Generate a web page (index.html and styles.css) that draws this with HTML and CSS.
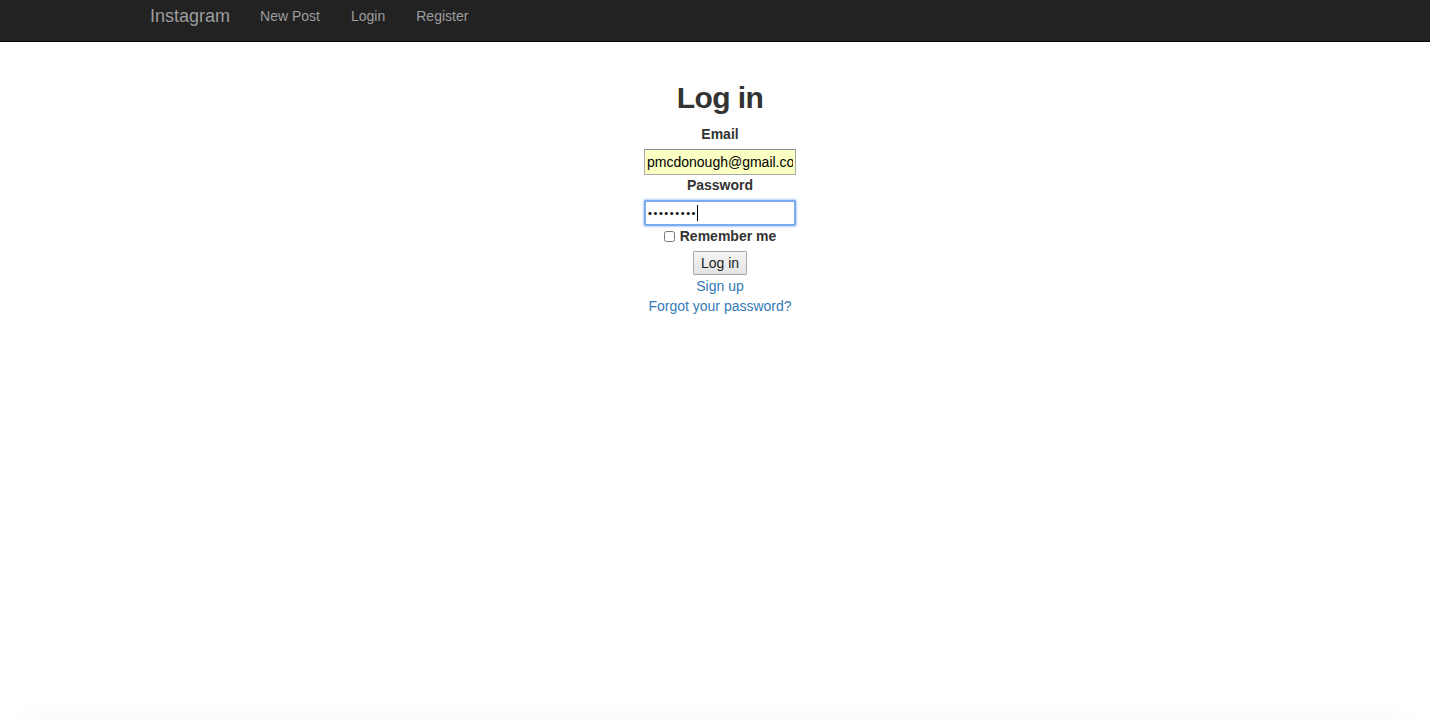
FILE: index.html
```html
<!DOCTYPE html>
<html lang="en">
<head>
<meta charset="utf-8">
<title>Instagram</title>
<link rel="stylesheet" href="styles.css">
</head>
<body>
<nav class="navbar">
  <a class="brand" href="#">Instagram</a>
  <a class="nav-link" href="#">New Post</a>
  <a class="nav-link" href="#">Login</a>
  <a class="nav-link" href="#">Register</a>
</nav>
<main class="main">
  <h1 class="title">Log in</h1>
  <form class="form">
    <label class="field-label" for="email">Email</label>
    <input class="field email" id="email" type="text" value="pmcdonough@gmail.com">
    <label class="field-label" for="pw">Password</label>
    <div class="field password" id="pw"><span class="dots">•••••••••</span><span class="caret"></span></div>
    <div class="remember"><input class="check" type="checkbox" id="rem"><label class="rem-label" for="rem">Remember me</label></div>
    <button class="btn" type="button">Log in</button>
  </form>
  <a class="link" href="#">Sign up</a>
  <a class="link" href="#">Forgot your password?</a>
</main>
<div class="window-shadow"></div>
</body>
</html>
```

FILE: styles.css
```css
html, body {
  margin: 0;
  padding: 0;
  background: #fff;
  height: 100%;
  overflow: hidden;
}
body {
  font-family: "Liberation Sans", Arial, Helvetica, sans-serif;
  font-size: 14px;
  line-height: 20px;
  color: #333;
}
.navbar {
  height: 41px;
  background: #222;
  border-bottom: 1px solid #080808;
  display: flex;
  align-items: center;
  padding-left: 135px;
  box-sizing: content-box;
}
.brand {
  font-size: 18px;
  color: #9d9d9d;
  text-decoration: none;
  padding: 0 15px;
  line-height: 20px;
  margin-top: -9px;
}
.nav-link {
  font-size: 14px;
  color: #9d9d9d;
  text-decoration: none;
  padding: 0 15px;
  line-height: 20px;
  margin-top: -9px;
}
.nav-link + .nav-link {
  margin-left: 1px;
}
.main {
  display: flex;
  flex-direction: column;
  align-items: center;
  padding-top: 39px;
  padding-left: 10px;
}
.title {
  font-size: 30px;
  font-weight: bold;
  line-height: 33px;
  letter-spacing: -0.6px;
  margin: 0 0 10px;
  color: #333;
}
.form {
  display: flex;
  flex-direction: column;
  align-items: center;
  margin: 0;
}
.field-label {
  font-weight: bold;
  line-height: 20px;
  margin-bottom: 5px;
}
.field {
  width: 152px;
  height: 26px;
  box-sizing: border-box;
  margin: 0;
  font-family: "Liberation Sans", Arial, sans-serif;
  font-size: 14px;
  color: #000;
}
.email {
  background: #fbffc4;
  border: 1px solid #a9a9a9;
  border-top-color: #8e8e8e;
  padding: 0 2px;
  outline: none;
  overflow: hidden;
}
.password {
  border: 2px solid #7aaaf0;
  border-radius: 2px;
  box-shadow: 0 0 2px 1px #b5d2f7;
  background: #fff;
  display: flex;
  align-items: center;
  padding: 0 1px 0 2px;
}
.dots {
  font-size: 11px;
  letter-spacing: 1.6px;
  line-height: 20px;
}
.caret {
  width: 1px;
  height: 16px;
  background: #000;
  margin-left: 0;
}
.remember {
  display: flex;
  align-items: center;
  height: 20px;
}
.check {
  width: 11px;
  height: 11px;
  margin: 0 5px 0 0;
}
.rem-label {
  font-weight: bold;
}
.btn {
  margin-top: 5px;
  width: 54px;
  height: 24px;
  font-family: "Liberation Sans", Arial, sans-serif;
  font-size: 14px;
  color: #222;
  background: linear-gradient(#f4f4f4, #e4e4e4);
  border: 1px solid #a6a6a6;
  border-radius: 1px;
  padding: 0;
}
.link {
  color: #337ab7;
  text-decoration: none;
  line-height: 20px;
}
.link:first-of-type {
  margin-top: 1px;
}
.window-shadow {
  position: fixed;
  left: 25px;
  right: 25px;
  top: 728px;
  height: 40px;
  border-radius: 20px;
  box-shadow: 0 0 30px 6px rgba(0, 0, 0, 0.05);
}
```
